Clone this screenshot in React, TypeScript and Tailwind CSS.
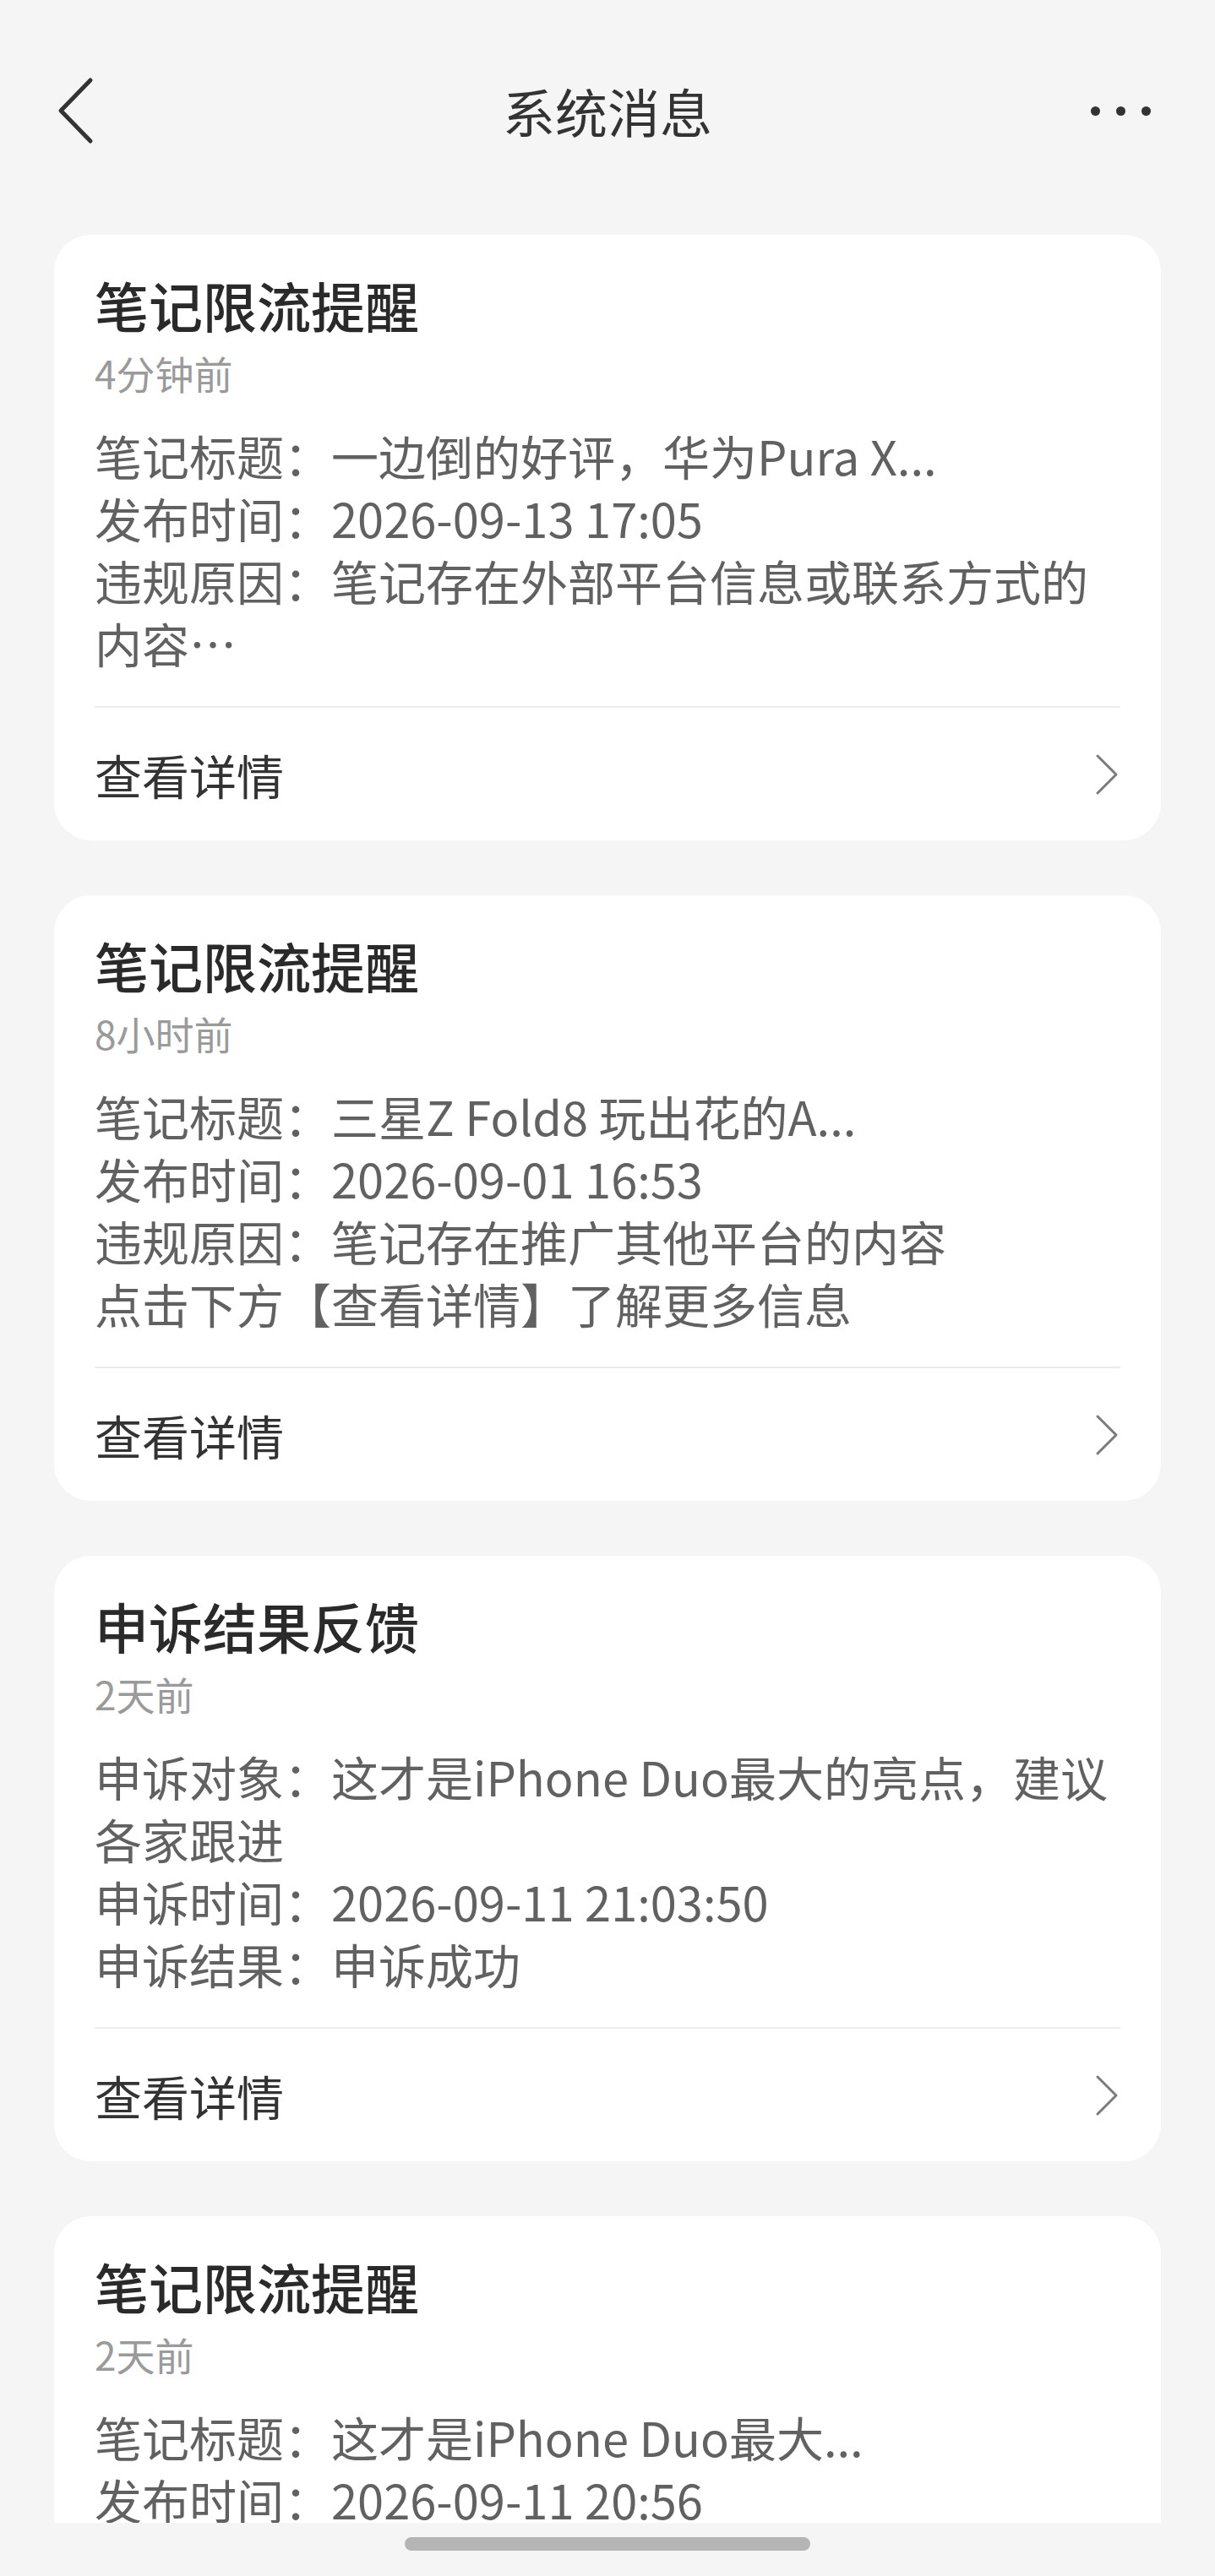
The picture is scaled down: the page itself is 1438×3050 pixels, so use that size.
import React from "react";

// One system notice card
interface Notice {
  title: string;
  time: string;
  lines: string[];
}

const notices: Notice[] = [
  {
    title: "笔记限流提醒",
    time: "4分钟前",
    lines: [
      "笔记标题：一边倒的好评，华为Pura X...",
      "发布时间：2026-09-13 17:05",
      "违规原因：笔记存在外部平台信息或联系方式的内容…",
    ],
  },
  {
    title: "笔记限流提醒",
    time: "8小时前",
    lines: [
      "笔记标题：三星Z Fold8 玩出花的A...",
      "发布时间：2026-09-01 16:53",
      "违规原因：笔记存在推广其他平台的内容",
      "点击下方【查看详情】了解更多信息",
    ],
  },
  {
    title: "申诉结果反馈",
    time: "2天前",
    lines: [
      "申诉对象：这才是iPhone Duo最大的亮点，建议",
      "各家跟进",
      "申诉时间：2026-09-11 21:03:50",
      "申诉结果：申诉成功",
    ],
  },
  {
    title: "笔记限流提醒",
    time: "2天前",
    lines: [
      "笔记标题：这才是iPhone Duo最大...",
      "发布时间：2026-09-11 20:56",
      "违规原因：笔记存在推广其他平台的内容",
    ],
  },
];

const BackIcon: React.FC = () => (
  <svg width="44" height="80" viewBox="0 0 44 80" fill="none">
    <polyline
      points="39,4 4,40 39,76"
      stroke="#333333"
      strokeWidth="5"
      strokeLinecap="round"
      strokeLinejoin="round"
    />
  </svg>
);

const ChevronRight: React.FC = () => (
  <svg width="28" height="50" viewBox="0 0 28 50" fill="none">
    <polyline
      points="3,3 25,25 3,47"
      stroke="#7a7a7a"
      strokeWidth="3"
      strokeLinecap="round"
      strokeLinejoin="round"
    />
  </svg>
);

const NoticeCard: React.FC<{ notice: Notice }> = ({ notice }) => (
  <div className="shrink-0 rounded-[44px] bg-white px-[48px] pt-[38px]">
    <div className="text-[64px] leading-[88px] font-medium text-[#2a2a2a]">{notice.title}</div>
    <div className="text-[46px] leading-[74px] text-[#9a9a9a]">{notice.time}</div>
    <div className="mt-[24px] text-[56px] leading-[74px] text-[#616161]">
      {notice.lines.map((line, i) => (
        <p key={i}>{line}</p>
      ))}
    </div>
    <div className="mt-[38px] h-[2px] bg-[#ececec]" />
    <div className="flex h-[157px] items-center justify-between pr-[2px]">
      <span className="text-[56px] text-[#333333]">查看详情</span>
      <ChevronRight />
    </div>
  </div>
);

export default function App() {
  return (
    <div className="flex h-[3050px] w-[1438px] flex-col overflow-hidden bg-[#f5f5f5] font-['Noto_Sans_CJK_SC','Noto_Sans',sans-serif]">
      {/* header */}
      <header className="relative flex h-[262px] shrink-0 items-center justify-between pl-[68px] pr-[76px]">
        <BackIcon />
        <h1 className="absolute left-1/2 -translate-x-1/2 text-[62px] font-normal text-[#333333]">系统消息</h1>
        <div className="flex items-center gap-[19px]">
          <span className="h-[11px] w-[11px] rounded-full bg-[#333333]" />
          <span className="h-[11px] w-[11px] rounded-full bg-[#333333]" />
          <span className="h-[11px] w-[11px] rounded-full bg-[#333333]" />
        </div>
      </header>

      {/* message list */}
      <main className="flex min-h-0 flex-1 flex-col gap-[65px] overflow-hidden px-[64px] pt-[16px]">
        {notices.map((n, i) => (
          <NoticeCard key={i} notice={n} />
        ))}
      </main>

      {/* home indicator */}
      <div className="flex h-[63px] shrink-0 justify-center pt-[17px]">
        <div className="h-[16px] w-[480px] rounded-full bg-[#b5b5b5]" />
      </div>
    </div>
  );
}
